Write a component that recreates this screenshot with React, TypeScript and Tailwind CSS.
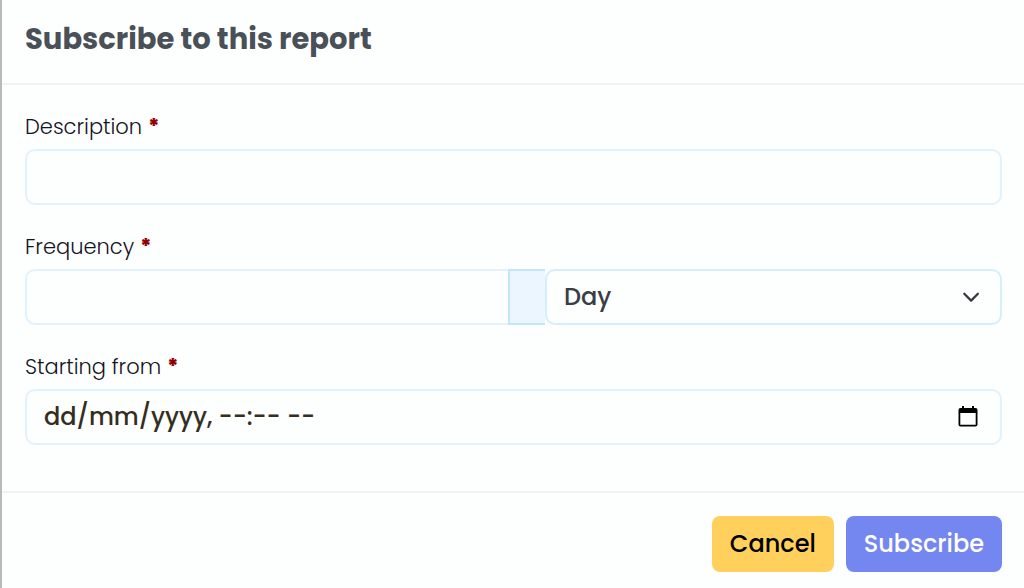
import type { ReactNode } from "react"

function FieldLabel({ htmlFor, children }: { htmlFor: string; children: ReactNode }) {
  return (
    <label htmlFor={htmlFor} className="block mb-1.5 text-[21px] leading-8 font-light text-[#14141f]">
      {children} <span className="font-extrabold text-[#900000]">*</span>
    </label>
  )
}

export default function App() {
  return (
    <div className="min-h-screen border-l-2 border-[#b9b9bb] bg-[#fdfefe] font-['Poppins','Inter',sans-serif]">
      <form>
        <header className="border-b-2 border-[#f1f2f3] pl-[23px] pr-6 pt-[18px] pb-[22px]">
          <h2 className="text-[29px] leading-[43px] font-bold text-[#495057]">Subscribe to this report</h2>
        </header>

        <div className="flex flex-col gap-[26px] pl-[23px] pr-[22px] pt-[26px] pb-[46px]">
          <div>
            <FieldLabel htmlFor="description">Description</FieldLabel>
            <input
              id="description"
              type="text"
              className="block w-full h-14 rounded-[10px] border-2 border-[#e1f2fd] px-[17px] text-2xl font-medium text-[#3a3d45]"
            />
          </div>

          <div>
            <FieldLabel htmlFor="frequency">Frequency</FieldLabel>
            <div className="flex">
              <div className="min-w-0 flex-[483]">
                <input
                  id="frequency"
                  type="text"
                  className="block w-full h-14 rounded-l-[10px] border-2 border-r-0 border-[#e1f2fd] px-[17px] text-2xl font-medium text-[#3a3d45]"
                />
              </div>
              <span className="w-[37px] h-14 border-2 border-r-0 border-[#c3e6fa] bg-[#ebf6fe]" />
              <div className="relative min-w-0 flex-[457]">
                <select
                  aria-label="Frequency unit"
                  className="block w-full h-14 appearance-none rounded-[10px] border-2 border-[#d5eefc] bg-[#fdfefe] px-[17px] text-2xl font-medium text-[#3a3d45]"
                >
                  <option>Day</option>
                </select>
                <svg
                  className="pointer-events-none absolute right-[21px] top-5 w-5 h-4"
                  viewBox="0 0 20 16"
                  fill="none"
                  stroke="#343a40"
                  strokeWidth={2.3}
                  strokeLinecap="round"
                  strokeLinejoin="round"
                >
                  <path d="M3.300 4.800l6.800 6.800 6.800-6.800" />
                </svg>
              </div>
            </div>
          </div>

          <div>
            <FieldLabel htmlFor="starting">Starting from</FieldLabel>
            <div className="relative">
              <input
                id="starting"
                type="text"
                placeholder="dd/mm/yyyy, --:-- --"
                className="block w-full h-14 rounded-[10px] border-2 border-[#e1f2fd] px-[17px] pb-0.5 text-2xl font-medium text-[#352d20] placeholder:text-[#352d20]"
              />
              <button type="button" aria-label="Pick a date" className="absolute right-[23px] top-4 w-[22px] h-6">
                <svg viewBox="0 0 22 24" className="w-full h-full">
                  <path
                    fill="#000"
                    d="M5 1h2v2h8V1h2v2h1.500a2 2 0 0 1 2 2v14.500a2 2 0 0 1-2 2h-15a2 2 0 0 1-2-2V5a2 2 0 0 1 2-2H5zM3.300 8v11.700h15.400V8z"
                  />
                </svg>
              </button>
            </div>
          </div>
        </div>

        <footer className="flex justify-end gap-3 border-t-2 border-[#f1f2f3] pr-[22px] pt-[23px] pb-4">
          <button type="button" className="h-14 rounded-lg bg-[#ffd15c] px-[18px] text-2xl font-medium text-black">
            Cancel
          </button>
          <button type="submit" className="h-14 rounded-lg bg-[#7487f0] px-[18px] text-2xl font-medium text-white">
            Subscribe
          </button>
        </footer>
      </form>
    </div>
  )
}
